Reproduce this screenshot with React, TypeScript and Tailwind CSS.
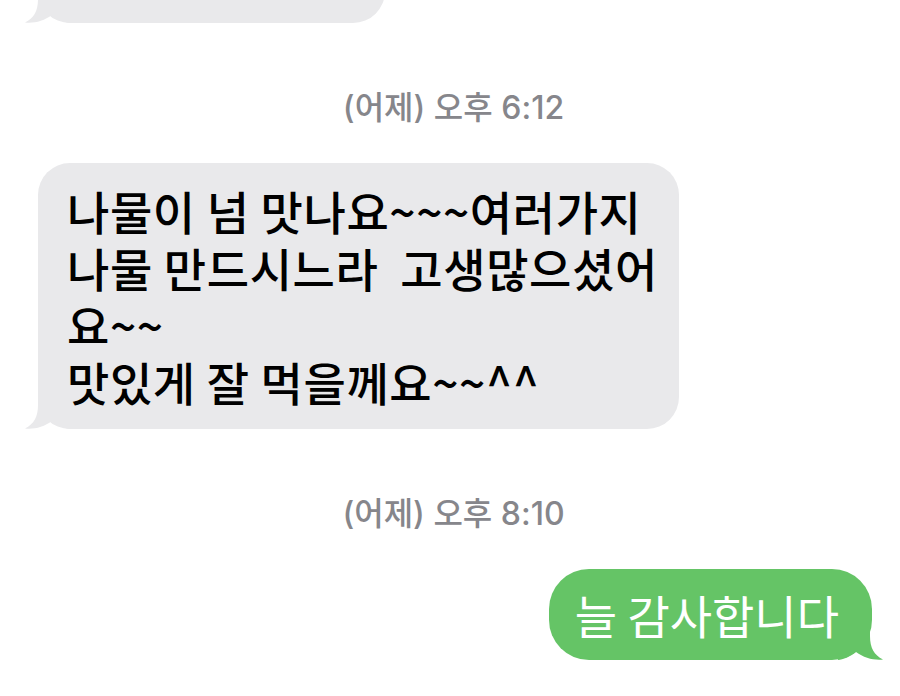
import React from "react";

function LeftTail({ color }: { color: string }) {
  return (
    <svg
      className="absolute left-[-13px] bottom-0"
      width="45"
      height="36"
      viewBox="0 0 45 36"
    >
      <path
        d="M13,0 L13,12 C13,24 9,31 0,35.5 C9,36.5 19,34 27,28 C33,33 40,35.5 45,36 L45,0 Z"
        fill={color}
      />
    </svg>
  );
}

function RightTail({ color }: { color: string }) {
  return (
    <svg
      className="absolute right-[-11px] bottom-0"
      width="45"
      height="36"
      viewBox="0 0 45 36"
    >
      <path
        d="M32,0 L32,12 C32,24 36,31 45,35.5 C36,36.5 26,34 18,28 C12,33 5,35.5 0,36 L0,0 Z"
        fill={color}
      />
    </svg>
  );
}

function Stamp({ time }: { time: string }) {
  return (
    <div className="mt-[67px] h-[36px] leading-[36px] text-center pl-[7px] text-[32px] font-medium text-[#86868b] font-['Inter','Noto_Sans_CJK_KR',sans-serif]">
      (어제) 오후 {time}
    </div>
  );
}

export default function App() {
  return (
    <div className="w-[900px] h-[696px] overflow-hidden bg-white font-['Noto_Sans_CJK_KR','Noto_Sans',sans-serif]">
      <div className="ml-[38px] mt-[-60px] w-[347px] h-[83px] rounded-[32px] bg-[#e9e9eb] relative">
        <LeftTail color="#e9e9eb" />
      </div>

      <Stamp time="6:12" />

      <div className="mt-[37px] ml-[38px] w-[641px] rounded-[32px] bg-[#e9e9eb] relative pl-[29px] pr-[10px] py-[19px]">
        <LeftTail color="#e9e9eb" />
        <div className="relative text-[46px] leading-[57px] font-medium tracking-[0.6px] text-black whitespace-pre">
          나물이 넘 맛나요~~~여러가지
          <br />
          나물 만드시느라  고생많으셨어
          <br />
          요~~
          <br />
          맛있게 잘 먹을께요~~^^
        </div>
      </div>

      <Stamp time="8:10" />

      <div className="mt-[37px] flex justify-end pr-[28px]">
        <div className="relative h-[91px] rounded-[40px] bg-[#65c466] pl-[26px] pr-[33px] flex items-center">
          <RightTail color="#65c466" />
          <span className="relative text-[46px] leading-[57px] font-normal text-white whitespace-nowrap">
            늘 감사합니다
          </span>
        </div>
      </div>
    </div>
  );
}
